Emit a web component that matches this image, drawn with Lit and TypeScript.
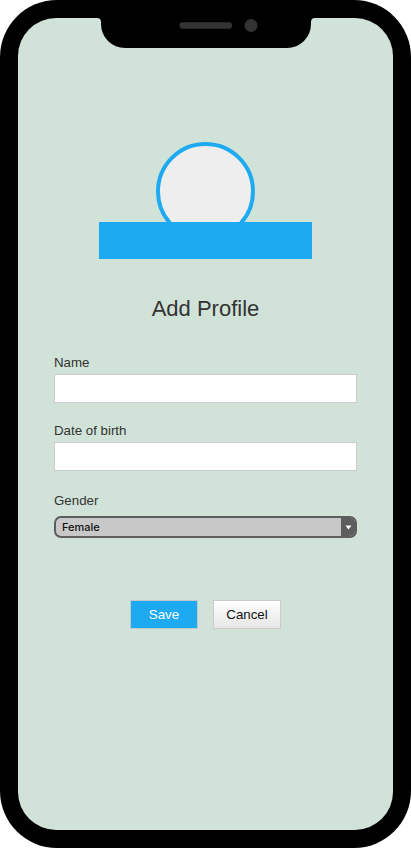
import { LitElement, html, css } from "lit";
import { customElement, property } from "lit/decorators.js";

@customElement("phone-notch")
class PhoneNotch extends LitElement {
  static styles = css`
    :host { display: block; height: 30px; }
    svg { display: block; margin: 0 auto; }
  `;
  render() {
    return html`<svg width="220" height="30" viewBox="0 0 220 30">
      <path d="M1 -1H219V0Q215 0 215 4V6A24 24 0 0 1 191 30H29A24 24 0 0 1 5 6V4Q5 0 1 0Z" fill="#000" />
      <rect x="83.500" y="4.200" width="52.500" height="6.600" rx="3.300" fill="#333" />
      <circle cx="155" cy="7.500" r="6.500" fill="#333" />
    </svg>`;
  }
}

@customElement("profile-field")
class ProfileField extends LitElement {
  @property() label = "";
  static styles = css`
    :host { display: block; }
    .label { font-size: 13.3px; line-height: 16px; height: 16px; color: #333; }
    .box { box-sizing: border-box; height: 29px; margin-top: 3px; background: #fff; border: 1px solid #ccc; }
  `;
  render() {
    return html`<div class="label">${this.label}</div><div class="box"></div>`;
  }
}

@customElement("app-root")
class AppRoot extends LitElement {
  static styles = css`
    :host { display: block; font-family: "Liberation Sans", Arial, sans-serif; }
    .phone { box-sizing: border-box; width: 411px; height: 848px; padding: 18px; background: #000; border-radius: 57px; overflow: hidden; }
    .screen { height: 812px; border-radius: 38px; background: #d1e2d8; overflow: hidden; }
    .avatar { height: 80px; margin-top: 94px; overflow: hidden; }
    .circle { box-sizing: border-box; width: 99px; height: 99px; margin: 0 auto; border: 4px solid #1eaaf1; border-radius: 50%; background: #eee; }
    .banner { width: 213px; height: 37px; margin: 0 auto; background: #1eaaf1; }
    h1 { margin: 37px 0 0; font-size: 22px; font-weight: 400; line-height: 26px; text-align: center; color: #333; }
    .form { margin: 33px 36px 0; }
    .date { margin-top: 20px; }
    .label { margin-top: 22px; font-size: 13.3px; line-height: 16px; height: 16px; color: #333; }
    .select { box-sizing: border-box; display: flex; height: 22px; margin-top: 7px; border: 2px solid #5d5d5d; border-radius: 7px; background: #c8c8c8; overflow: hidden; }
    .value { flex: 1; padding-left: 6px; font: 500 11px/18px Inter, sans-serif; color: #111; }
    .arrow { display: flex; width: 14px; align-items: center; justify-content: center; background: #5d5d5d; }
    .actions { display: flex; gap: 15px; margin: 62px 0 0 76px; }
    .button { box-sizing: border-box; width: 68px; height: 29px; border: 1px solid #c0c8cc; font-size: 13.3px; line-height: 27px; text-align: center; }
    .save { background: #1eaaf1; color: #fff; }
    .cancel { background: linear-gradient(#fff, #e6e6e6); color: #111; border-color: #ccc; }
  `;
  render() {
    return html`<div class="phone"><div class="screen">
      <phone-notch></phone-notch>
      <div class="avatar"><div class="circle"></div></div>
      <div class="banner"></div>
      <h1>Add Profile</h1>
      <div class="form">
        <profile-field label="Name"></profile-field>
        <profile-field class="date" label="Date of birth"></profile-field>
        <div class="label">Gender</div>
        <div class="select">
          <div class="value">Female</div>
          <div class="arrow"><svg width="7" height="5" viewBox="0 0 7 5"><path d="M.5 .5H6.500L3.500 4.500Z" fill="#fff" /></svg></div>
        </div>
        <div class="actions">
          <div class="button save">Save</div>
          <div class="button cancel">Cancel</div>
        </div>
      </div>
    </div></div>`;
  }
}
